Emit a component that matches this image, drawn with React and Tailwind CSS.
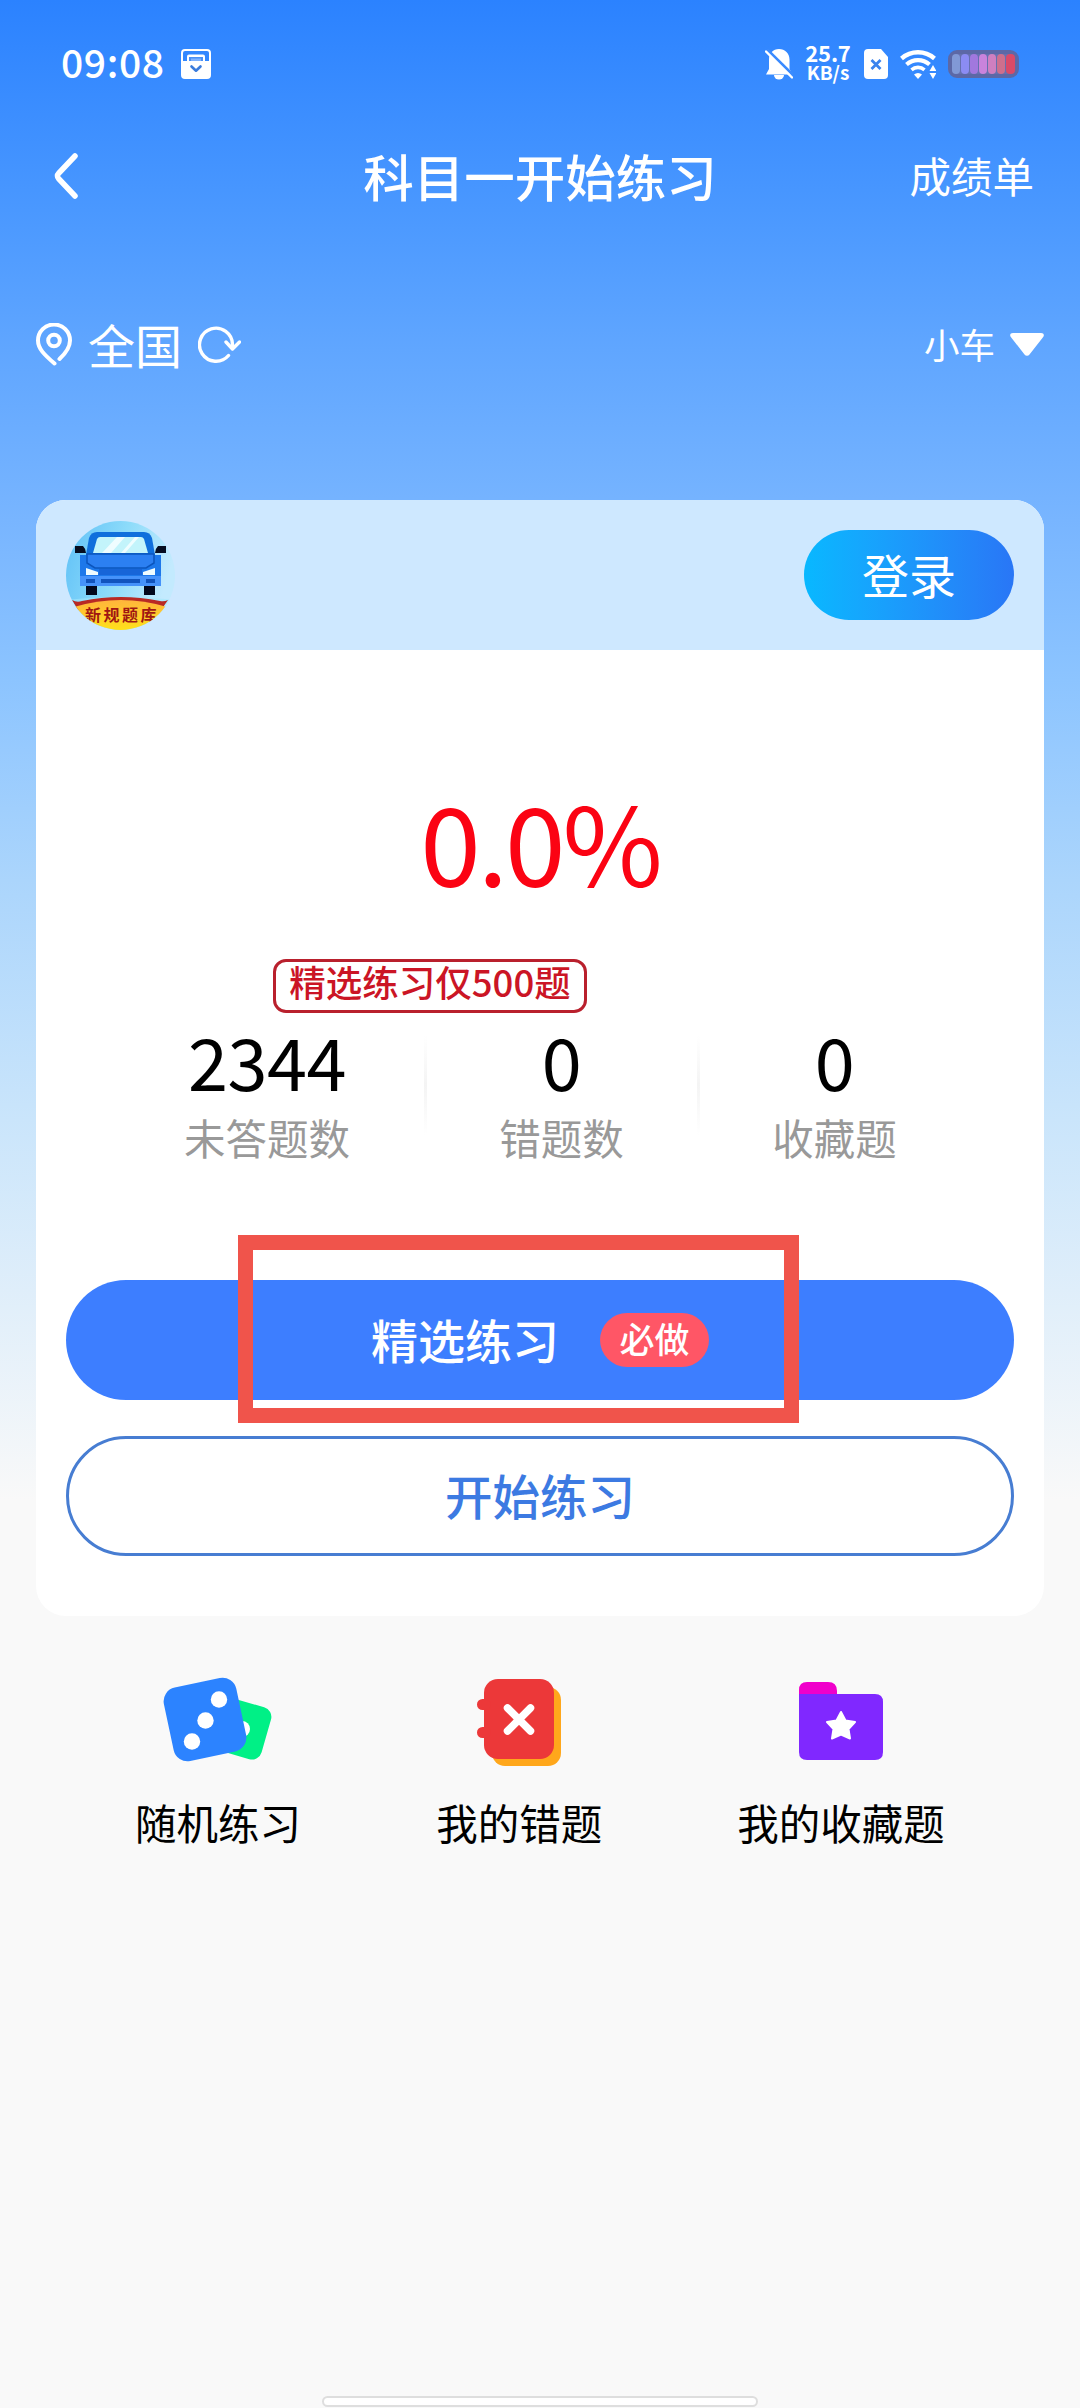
import React from 'react';

/**
 * StatusBar - system clock, network and battery icons
 */
const BATTERY_CELLS = ['#8199d6', '#8b8cf3', '#a178de', '#c983dc', '#cf7fc0', '#cd6f8d'];

const StatusBar = () => (
  <div className="flex h-32 items-center justify-between px-[61px] text-white">
    <div className="flex items-center">
      <span className="-mt-[6px] w-[104px] text-[39px] font-medium leading-[36px] tracking-[0.6px]">09:08</span>
      <svg className="ml-4 h-[30px] w-[30px]" viewBox="0 0 30 30" fill="none">
        <rect x="1" y="1" width="28" height="28" rx="3" stroke="#fff" strokeWidth="2" />
        <path d="M1 12h5V7.5a2 2 0 0 1 2-2h14a2 2 0 0 1 2 2V12h5v15a2 2 0 0 1-2 2H3a2 2 0 0 1-2-2z" fill="#fff" />
        <path d="M8 8h14v4H8z" fill="#4a90f5" />
        <path d="M10 9.5h10V12H10z" fill="#7fb2ff" />
        <path d="M10.5 17.5l4.500 4.200 4.500-4.200" stroke="#3a7bdc" strokeWidth="2.600" strokeLinecap="round" strokeLinejoin="round" />
      </svg>
    </div>
    <div className="flex items-center">
      <svg className="h-[31px] w-[28px]" viewBox="0 0 28 31" fill="none">
        <path d="M14 0c6 0 10.5 4.5 10.5 10.5V20l3 5.5H1L4 20v-9.500C4 4.500 8 0 14 0z" fill="#fff" />
        <path d="M9 26h10a5 4.500 0 0 1-10 0z" fill="#fff" />
        <path d="M2 .5L29 27" stroke="#3a8bff" strokeWidth="3" />
        <path d="M1 2.500L27 28.500" stroke="#fff" strokeWidth="2.400" strokeLinecap="round" />
      </svg>
      <div className="-mt-1 ml-[12px] flex w-[46px] flex-col items-center font-bold">
        <span className="text-[22px] leading-[19px] tracking-[-0.2px]">25.7</span>
        <span className="text-[19px] leading-[19px]">KB/s</span>
      </div>
      <svg className="ml-[13px] h-[30px] w-[24px]" viewBox="0 0 24 30" fill="none">
        <path d="M4 0h13l7 8v18a4 4 0 0 1-4 4H4a4 4 0 0 1-4-4V4a4 4 0 0 1 4-4z" fill="#fff" />
        <path d="M7.500 11l9 9M16.500 11l-9 9" stroke="#3a83ee" strokeWidth="2.800" />
      </svg>
      <svg className="ml-[12px] h-[30px] w-[36px]" viewBox="0 0 36 30" fill="none">
        <path d="M1.500 9.500a25 25 0 0 1 33 0" stroke="#fff" strokeWidth="4.400" />
        <path d="M6.500 15.500a17.500 17.500 0 0 1 23 0" stroke="#fff" strokeWidth="4.200" />
        <path d="M11.500 20.800a10 10 0 0 1 13 0" stroke="#fff" strokeWidth="3.600" />
        <path d="M14 25.500a6 6 0 0 1 8 0L18 30z" fill="#fff" />
        <path d="M33 16l3.500 6h-7zM33 30l-3.500-6h7z" fill="#fff" />
      </svg>
      <div className="ml-[12px] flex h-7 w-[71px] rounded-[9px] border-4 border-[#5c68a6] bg-[#6670b0]">
        {BATTERY_CELLS.map((color) => (
          <span key={color} className="mr-px h-5 w-2 rounded-[4px]" style={{ backgroundColor: color }} />
        ))}
        <span className="h-5 w-[9px] rounded-[4px] bg-[#d94a68]" />
      </div>
    </div>
  </div>
);

const NavBar = () => (
  <div className="grid h-24 grid-cols-[1fr_auto_1fr] items-center px-[46px] text-white">
    <svg className="ml-2 h-[46px] w-[24px]" viewBox="0 0 24 46" fill="none">
      <path d="M21 3L4.500 20.500a3.500 3.500 0 0 0 0 5L21 43" stroke="#fff" strokeWidth="5.500" strokeLinecap="round" />
    </svg>
    <h1 className="-mt-px whitespace-nowrap text-center text-[50.5px] font-medium leading-none">科目一开始练习</h1>
    <span className="-mt-px text-right text-[41.5px] leading-none">成绩单</span>
  </div>
);

const RegionBar = () => (
  <div className="mt-[72px] flex h-[96px] items-center justify-between px-9 text-white">
    <div className="flex items-center">
      <svg className="h-[43px] w-[36px]" viewBox="0 0 36 43" fill="none">
        <path d="M18.500 40.500C8 31.500 2 25.500 2 17.500a16 16 0 0 1 32 0c0 7-3.500 12-10.500 18.500" stroke="#fff" strokeWidth="4" strokeLinecap="round" />
        <circle cx="18" cy="17.500" r="5.800" stroke="#fff" strokeWidth="4" />
      </svg>
      <span className="-mt-px ml-[16px] w-[95px] text-[47px] leading-none">全国</span>
      <svg className="ml-[15px] h-[37px] w-[43px]" viewBox="0 0 43 37" fill="none">
        <path d="M30.500 29.500a16.500 16.500 0 1 1 4-11v4" stroke="#fff" strokeWidth="3.400" strokeLinecap="round" />
        <path d="M28 16l6.500 7L41.500 16" stroke="#fff" strokeWidth="3.400" strokeLinecap="round" strokeLinejoin="round" />
      </svg>
    </div>
    <div className="flex items-center">
      <span className="text-[35.5px] leading-none">小车</span>
      <svg className="ml-[15px] h-[23px] w-[34px]" viewBox="0 0 34 23">
        <path d="M3 0h28c2.500 0 3.800 2 2 4.200L19.500 21.500a3.200 3.200 0 0 1-5 0L1 4.200C-.800 2 .500 0 3 0z" fill="#fff" />
      </svg>
    </div>
  </div>
);

const CarLogo = () => (
  <svg className="h-[109px] w-[109px]" viewBox="0 0 109 109">
    <defs>
      <linearGradient id="sky" x1="0" y1="0" x2="1" y2="0.3">
        <stop offset="0" stopColor="#5fc0f7" />
        <stop offset="0.55" stopColor="#8edcfa" />
        <stop offset="1" stopColor="#c3eafe" />
      </linearGradient>
      <linearGradient id="gold" x1="0" y1="0" x2="0" y2="1">
        <stop offset="0" stopColor="#ffb53c" />
        <stop offset="1" stopColor="#ffe11a" />
      </linearGradient>
      <clipPath id="round">
        <circle cx="54.5" cy="54.5" r="54.5" />
      </clipPath>
    </defs>
    <g clipPath="url(#round)">
      <rect width="109" height="109" fill="url(#sky)" />
      <path d="M0 79c36-4 73-4 109 0v30H0z" fill="#a5e8fa" opacity=".6" />
      <path d="M20 34l3-17q2-6 8-6h47q6 0 8 6l3 17z" fill="#0f6fdc" />
      <path d="M27 32l4-14q1-2 3-2h41q2 0 3 2l4 14z" fill="#c3f4fb" />
      <path d="M36 32l15-16h8L45 32zM55 32l14-16h4L59 32z" fill="#effdff" />
      <path d="M9 25h8q3 3 3 7H9zM100 25h-8q-3 3-3 7h11z" fill="#060d20" />
      <path d="M14 34h81v23H14z" fill="#1d78ea" />
      <path d="M21 33h67v9l-8 5H29l-8-5z" fill="#2c80f2" stroke="#0b55bd" strokeWidth="1.5" />
      <path d="M33 48h43v6H33z" fill="#1765d8" />
      <path d="M14 55h81v10H14z" fill="#4592fa" />
      <path d="M20 47l12 4v3H20zM89 47l-12 4v3h12z" fill="#effcff" />
      <path d="M20 58h9v4h-9zM35 58h39v4H35zM80 58h9v4h-9z" fill="#1154bd" />
      <path d="M20 65h11v9H20zM78 65h11v9H78z" fill="#03081c" />
      <path d="M6 79q5 3 10 1 39-8 78 0 4 1 8-1l-7 10H12z" fill="#b82a25" />
      <path d="M8 86q47-14 93 0v23H8z" fill="url(#gold)" />
      <text x="56" y="100" textAnchor="middle" fontSize="16" fontWeight="700" letterSpacing="2.500" fill="#9f1712">
        新规题库
      </text>
    </g>
  </svg>
);

const Divider = () => (
  <div className="absolute -left-px top-5 h-[100px] w-[3px] bg-gradient-to-b from-white via-[#f4f4f4] to-white" />
);

const Stat = ({ value, label, className, divider }) => (
  <div className={`relative flex flex-col items-center ${className}`}>
    {divider && <Divider />}
    <span className="text-[72px] leading-[90px] tracking-[-0.5px] text-black">{value}</span>
    <span className="mt-1 text-[41.5px] leading-[56px] text-[#999]">{label}</span>
  </div>
);

const ScoreCard = () => (
  <section className="mx-9 mt-[108px] h-[1116px] overflow-hidden rounded-[30px] bg-white">
    <div className="flex h-[150px] items-center justify-between bg-[#cee8ff] px-[30px]">
      <CarLogo />
      <button className="h-[90px] w-[210px] rounded-full bg-gradient-to-r from-[#08b8ff] to-[#2976f6] pb-[3px] text-[47px] leading-none text-white">
        登录
      </button>
    </div>
    <div className="flex flex-col px-[30px]">
      <div className="mt-[136px] text-center text-[109px] leading-[108px] tracking-[-3px] text-[#fb0313]">0.0%</div>
      <div className="ml-[207px] mt-[65px] flex h-[54px] w-[314px] items-center justify-center whitespace-nowrap rounded-[13px] border-[3px] border-[#b9202d] pb-[7px] text-[36.5px] font-medium leading-none text-[#cb1525]">
        精选练习仅500题
      </div>
      <div className="mt-[2px] flex justify-center">
        <Stat value="2344" label="未答题数" className="w-[316px]" />
        <Stat value="0" label="错题数" className="w-[273px]" divider />
        <Stat value="0" label="收藏题" className="w-[273px]" divider />
      </div>
      <div className="relative mt-[115px]">
        <button className="flex h-[120px] w-full items-center justify-center rounded-full bg-[#3d7eff] text-white">
          <span className="-mt-[3px] text-[47px] font-medium leading-none">精选练习</span>
          <span className="ml-[41px] flex h-[54px] w-[109px] items-center justify-center rounded-full bg-[#ff5666] pb-[5px] text-[35px] font-medium leading-none">
            必做
          </span>
        </button>
        <div className="pointer-events-none absolute left-[172px] top-[-45px] h-[188px] w-[561px] border-[15px] border-[#f0544b]" />
      </div>
      <button className="mt-9 h-[120px] w-full rounded-full border-[3px] border-[#477dd2] bg-white pb-[3px] text-[47.5px] font-medium leading-none text-[#3c7ae2]">
        开始练习
      </button>
    </div>
  </section>
);

const DiceIcon = () => (
  <svg className="h-[90px] w-[110px]" viewBox="0 0 110 90">
    <rect x="54" y="25" width="50" height="54" rx="10" fill="#00f086" transform="rotate(16 79 53)" />
    <circle cx="79" cy="52" r="8" fill="#fff" />
    <rect x="5" y="5" width="74" height="75" rx="14" fill="#2c83ff" transform="rotate(-12 42 42.5)" />
    <circle cx="56" cy="22.5" r="8.200" fill="#fff" />
    <circle cx="42.5" cy="43.5" r="8.200" fill="#fff" />
    <circle cx="29" cy="64.5" r="8.200" fill="#fff" />
  </svg>
);

const NotebookIcon = () => (
  <svg className="h-[90px] w-[84px]" viewBox="0 0 84 90">
    <rect x="15" y="10" width="69" height="79" rx="13" fill="#ffa71b" />
    <rect x="7" y="2" width="70" height="80" rx="14" fill="#ec3839" />
    <rect x="0" y="22" width="14" height="11" rx="5.500" fill="#ec3839" />
    <rect x="0" y="50" width="14" height="11" rx="5.500" fill="#ec3839" />
    <path d="M30.500 31l23 23M53.500 31l-23 23" stroke="#fff" strokeWidth="7.500" strokeLinecap="round" />
  </svg>
);

const FolderIcon = () => (
  <svg className="h-[90px] w-[84px]" viewBox="0 0 84 90">
    <path d="M0 20V13q0-8 8-8h21q9 0 9 9v6z" fill="#f000cb" />
    <path d="M0 17h76q8 0 8 8v50q0 8-8 8H8q-8 0-8-8z" fill="#8028ff" />
    <path d="M42 35l4.500 8.500 9.500 1.500-6.500 7 1.500 9.500-9-4-9 4 1.500-9.500-6.500-7 9.500-1.500z" fill="#fff" stroke="#fff" strokeWidth="2" strokeLinejoin="round" />
  </svg>
);

const Shortcut = ({ icon, label }) => (
  <div className="flex flex-col items-center">
    {icon}
    <span className="mt-[34px] text-[41.5px] leading-[42px] text-black">{label}</span>
  </div>
);

export default function App() {
  return (
    <main className="flex h-[2408px] w-[1080px] flex-col overflow-hidden bg-[#f9f9f9] bg-[linear-gradient(180deg,#2b82ff_0px,#4a98ff_210px,#60a6ff_350px,#78b5ff_520px,#8cc4ff_680px,#abd5fc_880px,#cae5fb_1120px,#f9f9f9_1500px)] font-['Noto_Sans_CJK_SC',sans-serif]">
      <StatusBar />
      <NavBar />
      <RegionBar />
      <ScoreCard />
      <div className="mt-[61px] flex justify-evenly">
        <Shortcut icon={<DiceIcon />} label="随机练习" />
        <Shortcut icon={<NotebookIcon />} label="我的错题" />
        <Shortcut icon={<FolderIcon />} label="我的收藏题" />
      </div>
      <div className="mx-auto mb-px mt-auto h-[11px] w-[436px] rounded-full border-2 border-[#dedede] bg-white" />
    </main>
  );
}
